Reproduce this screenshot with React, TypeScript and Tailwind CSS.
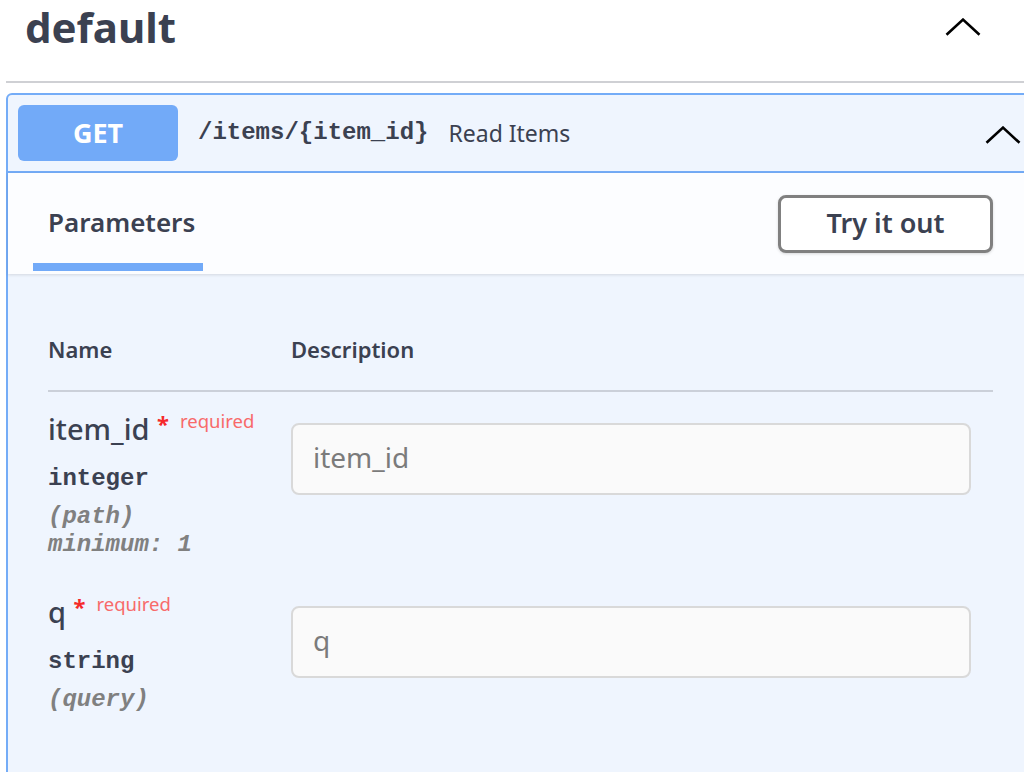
import React from "react";

const sans = { fontFamily: '"Noto Sans", "Open Sans", sans-serif' };

function Chevron({ className }: { className?: string }) {
  return (
    <svg className={className} viewBox="0 0 36 18" fill="none">
      <polyline points="1.5,16.8 18,1.6 34.5,16.8" stroke="#000" strokeWidth="2.6" />
    </svg>
  );
}

function ParamRow({
  name,
  type,
  location,
  extra,
  placeholder,
}: {
  name: string;
  type: string;
  location: string;
  extra?: string;
  placeholder: string;
}) {
  return (
    <div className="grid grid-cols-[243px_1fr]">
      <div className="pt-[17px] pb-[16px]">
        <div className="flex items-baseline text-[29px] leading-[40px] font-medium text-[#3b4151]">
          <span>{name}</span>
          <span>&nbsp;</span>
          <span className="relative -top-[8px] text-[22px] font-bold text-[#f52a2a]">*</span>
          <span className="relative -top-[12px] pl-[11px] text-[18.5px] font-normal text-[#f86a6a]">required</span>
        </div>
        <div className="mt-[12px] text-[24px] leading-[28px] font-bold text-[#3b4151] font-['Liberation_Mono',monospace]">
          {type}
        </div>
        <div className="mt-[10px] text-[24px] leading-[28px] font-bold italic text-[#808080] font-['Liberation_Mono',monospace]">
          <div>({location})</div>
          {extra && <div>{extra}</div>}
        </div>
      </div>
      <div className="pt-[17px] pb-[16px]">
        <input
          placeholder={placeholder}
          className="mt-[14px] w-[680px] h-[72px] rounded-[8px] border-2 border-[#d9d9d9] bg-[#fafafa] px-[20px] pb-[5px] text-[28px] text-[#3b4151] placeholder:text-[#7b7b7b] outline-none"
          style={sans}
        />
      </div>
    </div>
  );
}

export default function App() {
  return (
    <div className="w-[1024px] h-[772px] overflow-hidden bg-white" style={sans}>
      <div className="ml-[6px] w-[1029px]">
        {/* tag header */}
        <div className="flex items-center h-[54px] pl-[19px] pr-[54px]">
          <h3 className="flex-1 text-[42px] leading-none font-bold text-[#3b4151]">default</h3>
          <Chevron className="w-[36px] h-[18px]" />
        </div>
        <div className="mt-[27px] h-[2px] bg-[#cfd0d4]" />

        {/* opblock */}
        <div className="mt-[10px] rounded-[6px] border-2 border-[#74acf7] bg-[#eff5fe]">
          {/* summary */}
          <div className="flex items-center pl-[10px] pr-[12px] py-[10px] border-b-2 border-[#74acf7]">
            <div className="w-[160px] h-[56px] rounded-[6px] bg-[#72aaf8] flex items-center justify-center text-white text-[27px] font-bold">
              GET
            </div>
            <span className="pl-[20px] pr-[20px] text-[24px] font-bold text-[#3b4151] font-['Liberation_Mono',monospace]">
              /items/{"{item_id}"}
            </span>
            <span className="flex-1 text-[23px] text-[#3b4151]">Read Items</span>
            <Chevron className="w-[36px] h-[18px] mt-[4px]" />
          </div>

          {/* section header */}
          <div className="flex items-stretch justify-between h-[101px] px-[40px] bg-[#fcfdff] shadow-[0_1px_3px_rgba(0,0,0,0.12)]">
            <div className="flex flex-col justify-end pb-[3px]">
              <div className="text-[26px] leading-[36px] font-semibold text-[#3b4151]">Parameters</div>
              <div className="mt-[23px] -ml-[15px] h-[8px] w-[170px] bg-[#72aaf8]" />
            </div>
            <button className="self-center w-[215px] h-[58px] rounded-[8px] border-[3px] border-[#808080] bg-white text-[27px] font-semibold text-[#3b4151] shadow-[0_1px_3px_rgba(0,0,0,0.15)]">
              Try it out
            </button>
          </div>

          {/* table */}
          <div className="px-[40px] pt-[60px] pb-[80px]">
            <div className="grid grid-cols-[243px_1fr] pb-[26px] border-b-2 border-[#cbd0d9] text-[22px] leading-[30px] font-semibold text-[#3b4151]">
              <div>Name</div>
              <div>Description</div>
            </div>
            <ParamRow name="item_id" type="integer" location="path" extra="minimum: 1" placeholder="item_id" />
            <ParamRow name="q" type="string" location="query" placeholder="q" />
          </div>
        </div>
      </div>
    </div>
  );
}
